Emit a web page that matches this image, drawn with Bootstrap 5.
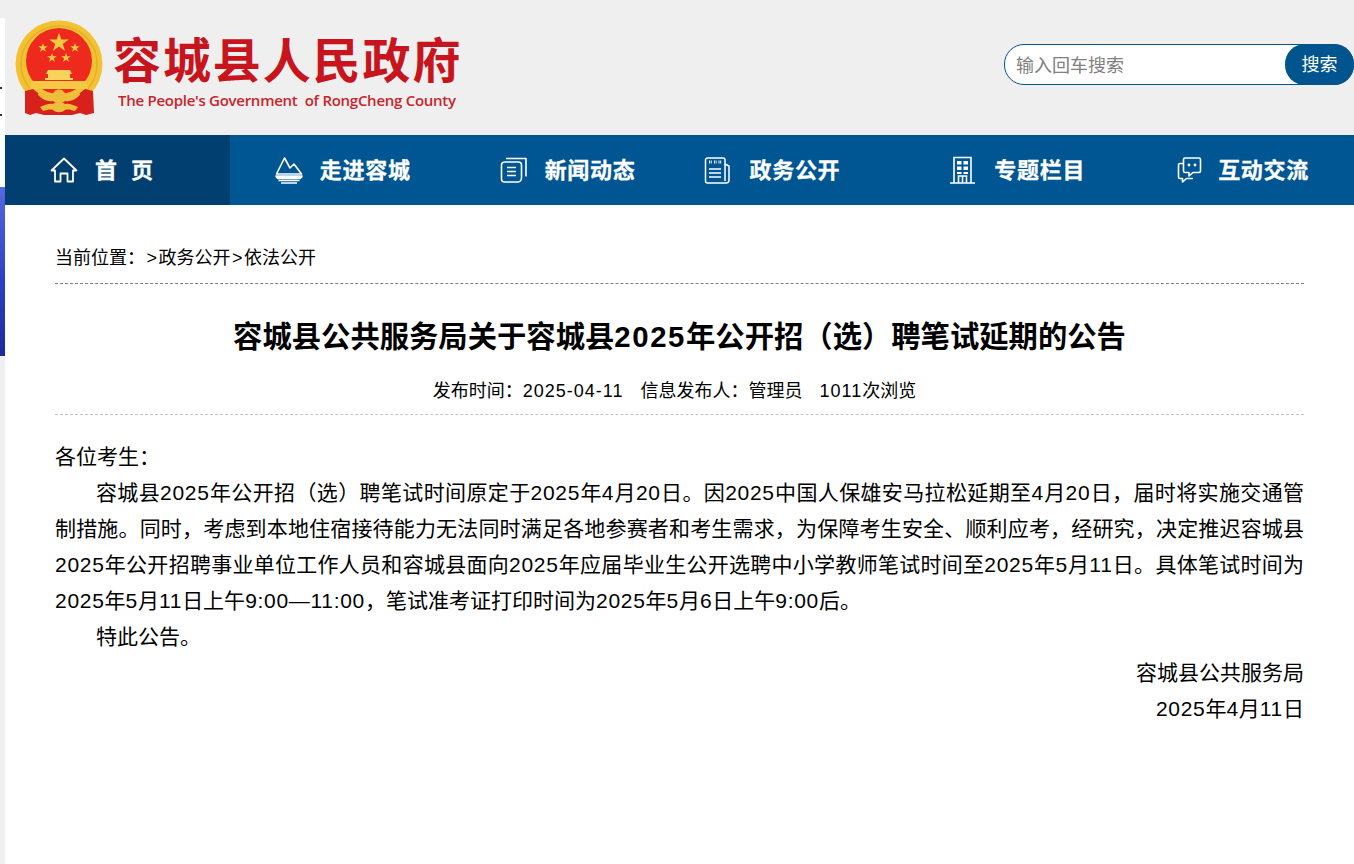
<!DOCTYPE html>
<html lang="zh-CN">
<head>
<meta charset="utf-8">
<title>容城县公共服务局关于容城县2025年公开招（选）聘笔试延期的公告</title>
<link href="https://cdn.jsdelivr.net/npm/bootstrap@5.3.0/dist/css/bootstrap.min.css" rel="stylesheet">
<style>
html,body{height:100%;overflow:hidden}
body{font-family:"Liberation Sans","Noto Sans CJK SC",sans-serif;color:#000;background:#fff}
.shell{height:864px}
.edge{width:5px;flex:none}
.edge-a{height:18px;background:#efefef}
.edge-b{height:169px;background:#fff;padding-top:69px}
.edge-dot{width:2px;height:2px;background:#333;margin-bottom:25px}
.edge-c{height:169px;background:linear-gradient(180deg,#5468e0,#2f3fc4 55%,#1c2a9c)}
.edge-d{height:508px;background:#f0f0f0}
.page-col{min-width:0}
.top-band{height:135px;background:#efefef;padding-left:10px}
.brand-name{font-size:48px;line-height:54px;font-weight:700;color:#c8141c;letter-spacing:1.9px;margin-top:8px;white-space:nowrap}
.brand-en{font-family:"Open Sans",sans-serif;font-size:15px;line-height:18px;font-weight:600;color:#c8242c;margin-top:2px;margin-left:5px;white-space:pre;letter-spacing:-.27px}
.searcher{width:350px;height:41px;border:1px solid #00558f;border-radius:20px;background:#fff;margin-top:-6px}
.searcher input{border:0;outline:0;background:transparent;font-size:18px;color:#333;padding:3px 0 0 11px;width:280px;min-width:0}
.searcher input::placeholder{color:#808080;opacity:1}
.search-go{width:69px;height:41px;margin:-1px;border:0;border-radius:20px;background:#00558f;color:#fff;font-size:18px;padding:1px 0 0}
.nav-band{height:70px;background:#005593}
.nav-cell{width:225px;padding-left:45px;color:#fff;font-size:22px;font-weight:700;text-decoration:none;gap:17px;white-space:nowrap;letter-spacing:.7px;-webkit-text-stroke:.3px #fff}
.nav-cell:hover{color:#fff}
.nav-cell.on{background:#003f70}
.nav-cell svg{flex:none}
.nav-cell.cell-news{padding-left:25px}
.nav-cell.cell-talk{padding-left:48px;gap:15px}
.word-gap{letter-spacing:14px}
.content{padding:0 50px}
.crumb{height:79px;padding-top:41px;font-size:18px;line-height:24px;border-bottom:1px dashed #808080}
.crumb-sep{margin:0 1.5px}
.doc-title{font-size:29.33px;line-height:40px;font-weight:700;margin:33px 0 0;text-align:center}
.title-num{letter-spacing:1.6px}
.doc-meta{font-size:18px;line-height:24px;padding-top:22px;padding-right:10px;box-sizing:content-box;gap:17px;border-bottom:1px dashed #c4c4c4;height:35px}
.meta-num{letter-spacing:1px}
.doc-body{font-size:21px;line-height:36px;margin-top:24px;text-align:justify}
.doc-body p{margin:0}
.body-num{letter-spacing:.7px}
.indent{text-indent:41px}
</style>
</head>
<body>
<div class="d-flex shell">
  <div class="edge" aria-hidden="true">
    <div class="edge-a"></div>
    <div class="edge-b"><div class="edge-dot"></div><div class="edge-dot"></div></div>
    <div class="edge-c"></div>
    <div class="edge-d"></div>
  </div>
  <div class="page-col flex-grow-1">
    <header class="top-band d-flex align-items-center justify-content-between">
      <div class="d-flex align-items-center gap-2">
        <svg class="emblem" width="90" height="96" viewBox="0 0 90 96" aria-label="国徽">
          <circle cx="44" cy="44" r="43.500" fill="#f3c233"/>
          <circle cx="44" cy="44" r="38" fill="none" stroke="#e8ad2a" stroke-width="1.500"/>
          <circle cx="44" cy="41" r="33" fill="#ee2a1f"/>
          <path d="M44 12.500l2.300 7h7.500l-6 4.400 2.300 7.100-6.100-4.400-6.100 4.400 2.300-7.100-6-4.400h7.500z" fill="#f5c842"/>
          <path d="M28 23l1.200 3.300h3.500l-2.800 2.100 1 3.400-2.900-2-2.900 2 1-3.400-2.800-2.100h3.500zM60 23l1.200 3.300h3.500l-2.800 2.100 1 3.400-2.900-2-2.900 2 1-3.400-2.800-2.100h3.500zM37 33l1.200 3.300h3.500l-2.800 2.100 1 3.400-2.900-2-2.900 2 1-3.400-2.800-2.100h3.500zM51 33l1.200 3.300h3.500l-2.800 2.100 1 3.400-2.900-2-2.900 2 1-3.400-2.800-2.100h3.500z" fill="#f5c842"/>
          <path d="M33 50h22l2 4h-2v4h3v2H30v-2h3v-4h-2z" fill="#f7d35e"/>
          <path d="M17 61h54l2 8H15z" fill="#f6c945"/>
          <path d="M10 71l8-2 10 8h32l10-8 8 2 1 22-8 2-6-2-8 2H29l-8-2-6 2-5-2z" fill="#d8201c"/>
          <path d="M24 71c6 5 12 5 16 0 1-2 7-2 8 0 4 5 10 5 16 0l1 4c-5 5-10 7-15 6-2 2-10 2-12 0-5 1-10-1-15-6z" fill="#f0bd3a"/>
          <path d="M25 87c5-2 9-4 13-3 3-3 9-3 12 0 4-1 8 1 13 3l-3 4c-4-1-7-2-10-1-3 3-9 3-12 0-3-1-6 0-10 1z" fill="#f0bd3a"/>
        </svg>
        <div>
          <div class="brand-name">容城县人民政府</div>
          <div class="brand-en">The People's Government  of RongCheng County</div>
        </div>
      </div>
      <form class="searcher d-flex align-items-center" onsubmit="return false">
        <input type="text" placeholder="输入回车搜索" aria-label="搜索">
        <button class="search-go ms-auto" type="submit">搜索</button>
      </form>
    </header>
    <nav class="nav-band d-flex">
      <a class="nav-cell on d-flex align-items-center" href="#">
        <svg width="28" height="28" viewBox="0 0 28 28" fill="none" stroke="#fff" stroke-width="1.8" stroke-linejoin="round"><path d="M1.500 14.500L14 2.500l12.500 12h-3.500v11h-5.500v-8h-7v8H5v-11z"/></svg>
        <span class="word-gap">首页</span></a>
      <a class="nav-cell d-flex align-items-center" href="#">
        <svg width="28" height="28" viewBox="0 0 28 28" fill="none" stroke="#fff" stroke-width="1.6" stroke-linejoin="round"><path d="M1.500 18L9.500 2l5.500 10 4-4 7.500 10z"/><path d="M1 20h26c0 1-1 2-2 2.500H3C2 22 1 21 1 20z" fill="#fff"/><path d="M3.500 24.500h21M6 27h16"/></svg>
        <span>走进容城</span></a>
      <a class="nav-cell d-flex align-items-center" href="#">
        <svg width="28" height="28" viewBox="0 0 28 28" fill="none" stroke="#fff" stroke-width="1.6" stroke-linejoin="round"><path d="M1.500 9a3 3 0 0 1 3-3h14a3 3 0 0 1 3 3v13a4 4 0 0 1-4 4H4.500a3 3 0 0 1-3-3z"/><path d="M6 2.500h20v18M7 11.500h9M7 15.500h9M7 19.500h9"/></svg>
        <span>新闻动态</span></a>
      <a class="nav-cell cell-news d-flex align-items-center" href="#">
        <svg width="28" height="28" viewBox="0 0 28 28" fill="none" stroke="#fff" stroke-width="1.5" stroke-linejoin="round"><path d="M21 8V4a2 2 0 0 0-2-2H3.500a2 2 0 0 0-2 2v21a2 2 0 0 0 2 2H22a3 3 0 0 0 3-3V10l-4-2v17"/><path d="M5 13h12M5 17h12M5 21h12"/><path d="M5 6h3M10 6h2.500M14.500 6h3" stroke-width="3" stroke-dasharray="1 .7"/></svg>
        <span>政务公开</span></a>
      <a class="nav-cell d-flex align-items-center" href="#">
        <svg width="28" height="28" viewBox="0 0 28 28" fill="none" stroke="#fff" stroke-width="1.6"><path d="M1 27h25M5 27V1.500h17V27M9.500 27v-7h8v7M13.500 20v7"/><path d="M8 5h4.500v3.500H8zM14.500 5H19v3.500h-4.500zM8 10.500h4.500V14H8zM14.500 10.500H19V14h-4.500zM8 16h4.500v2H8zM14.500 16H19v2h-4.500z" fill="#fff" stroke="none"/></svg>
        <span>专题栏目</span></a>
      <a class="nav-cell cell-talk d-flex align-items-center" href="#">
        <svg width="26" height="28" viewBox="0 0 26 28" fill="none" stroke="#fff" stroke-width="1.6" stroke-linejoin="round"><path d="M8 2h14a1.500 1.500 0 0 1 1.500 1.500V15a1.500 1.500 0 0 1-1.500 1.500h-6L12 20v-3.500H8A1.500 1.500 0 0 1 6.500 15V3.500A1.500 1.500 0 0 1 8 2z"/><path d="M6.500 7.500H3A1.500 1.500 0 0 0 1.500 9v12A1.500 1.500 0 0 0 3 22.500h2.500V26l4-3.500H16"/><circle cx="12" cy="9" r="1.400" fill="#fff" stroke="none"/><circle cx="18" cy="9" r="1.400" fill="#fff" stroke="none"/></svg>
        <span>互动交流</span></a>
    </nav>
    <main class="content">
      <div class="crumb">当前位置：<span class="crumb-sep">&gt;</span>政务公开<span class="crumb-sep">&gt;</span>依法公开</div>
      <h1 class="doc-title">容城县公共服务局关于容城县<span class="title-num">2025</span>年公开招（选）聘笔试延期的公告</h1>
      <div class="doc-meta d-flex justify-content-center">
        <span>发布时间：<span class="meta-num">2025-04-11</span></span>
        <span>信息发布人：管理员</span>
        <span><span class="meta-num">1011</span>次浏览</span>
      </div>
      <article class="doc-body">
        <p>各位考生：</p>
        <p class="indent">容城县<span class="body-num">2025</span>年公开招（选）聘笔试时间原定于<span class="body-num">2025</span>年<span class="body-num">4</span>月<span class="body-num">20</span>日。因<span class="body-num">2025</span>中国人保雄安马拉松延期至<span class="body-num">4</span>月<span class="body-num">20</span>日，届时将实施交通管制措施。同时，考虑到本地住宿接待能力无法同时满足各地参赛者和考生需求，为保障考生安全、顺利应考，经研究，决定推迟容城县<span class="body-num">2025</span>年公开招聘事业单位工作人员和容城县面向<span class="body-num">2025</span>年应届毕业生公开选聘中小学教师笔试时间至<span class="body-num">2025</span>年<span class="body-num">5</span>月<span class="body-num">11</span>日。具体笔试时间为<span class="body-num">2025</span>年<span class="body-num">5</span>月<span class="body-num">11</span>日上午<span class="body-num">9:00—11:00</span>，笔试准考证打印时间为<span class="body-num">2025</span>年<span class="body-num">5</span>月<span class="body-num">6</span>日上午<span class="body-num">9:00</span>后。</p>
        <p class="indent">特此公告。</p>
        <p class="text-end">容城县公共服务局</p>
        <p class="text-end"><span class="body-num">2025</span>年<span class="body-num">4</span>月<span class="body-num">11</span>日</p>
      </article>
    </main>
  </div>
</div>
<script src="https://cdn.jsdelivr.net/npm/bootstrap@5.3.0/dist/js/bootstrap.bundle.min.js"></script>
</body>
</html>
